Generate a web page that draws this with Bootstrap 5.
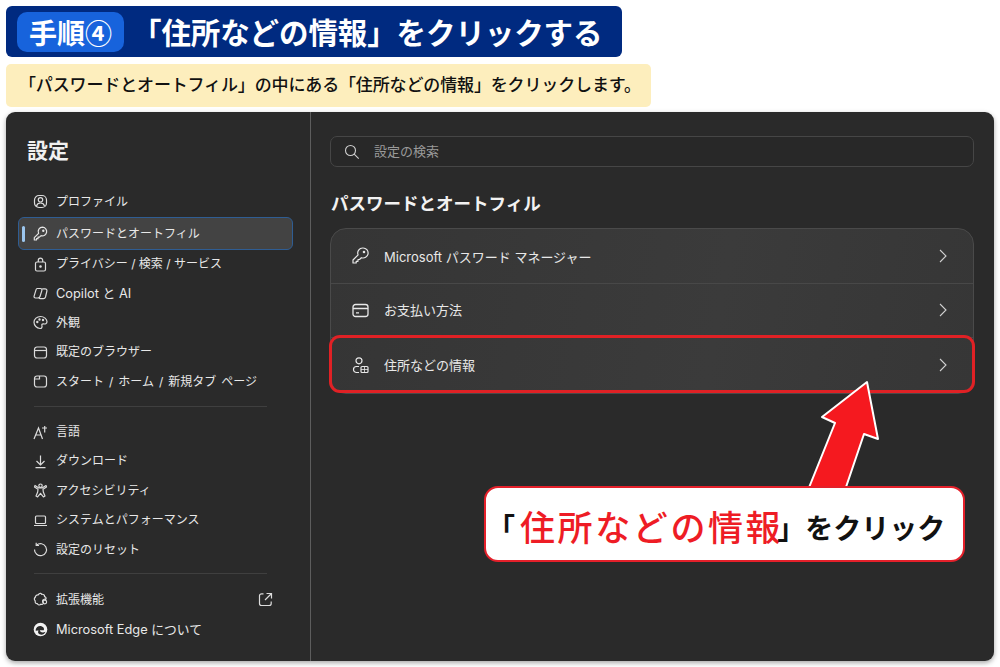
<!DOCTYPE html>
<html lang="ja">
<head>
    <meta charset="UTF-8">
    <meta name="viewport" content="width=device-width, initial-scale=1.0">
    <title>住所などの情報</title>

    <link href="https://cdn.jsdelivr.net/npm/bootstrap@5.3.3/dist/css/bootstrap.min.css" rel="stylesheet">

    <style>
        html, body { height: 667px; overflow: hidden; }
        body {
            background: #fff;
            font-family: Inter, "Noto Sans CJK JP", sans-serif;
            padding: 6px 6px 0;
            position: relative;
        }

        .step-bar {
            width: 616px; height: 51px;
            background: #002a80;
            border-radius: 6px;
            color: #fff;
            padding-left: 11px;
            font-family: "Noto Sans CJK JP", sans-serif;
        }
        .step-no {
            width: 107px; height: 40px;
            background: #1763dc;
            border-radius: 10px;
            font-size: 28px; font-weight: 700;
            line-height: 40px;
            white-space: nowrap;
        }
        .step-no span { font-size: 27px; }
        .step-title {
            font-size: 29.5px; font-weight: 700;
            margin-left: 8px;
            letter-spacing: -.1px;
            white-space: nowrap;
        }
        .note-bar {
            width: 645px; height: 43px;
            margin-top: 7px;
            background: #fdeebd;
            border-radius: 5px;
            color: #111;
            font-size: 17px; font-weight: 500;
            letter-spacing: -.14px;
            padding-left: 13px;
            white-space: nowrap;
        }
        .win {
            width: 988px; height: 549px;
            margin-top: 5px;
            background: #2a2a2a;
            border-radius: 9px;
            color: #e8e8e8;
            box-shadow: 0 2px 5px rgba(0, 0, 0, .35);
            overflow: hidden;
        }
        .side {
            width: 305px; height: 100%;
            border-right: 1px solid #5d5d5d;
            padding: 26px 17px 0 12px;
        }
        .side-title {
            font-size: 21px; font-weight: 700;
            color: #f0f0f0;
            margin: 0 0 23px 9px;
            line-height: 26px;
        }
        .side-item {
            height: 29.4px;
            padding-left: 15px;
            font-size: 12px;
            gap: 8px;
            position: relative;
            white-space: nowrap;
        }
        .side-item svg { flex: none; }
        .side-item.is-on {
            height: 33px;
            margin: 1px 0 -1px;
            background: #434343;
            border: 1px solid #2f5d93;
            border-radius: 6px;
            padding-left: 14px;
        }
        .side-item.is-on::before {
            content: "";
            position: absolute;
            left: 3px; top: 8px;
            width: 3px; height: 16px;
            border-radius: 2px;
            background: #9cc6ee;
        }
        .side-sep {
            height: 1px;
            background: #3f3f3f;
            margin: 10px 26px 10px 16px;
        }
        .side-sep.is-last { margin: 9px 26px 11px 16px; }
        .wide-words { word-spacing: 1.6px; }
        .latin-row { font-size: 12.8px; }
        .side-ext { margin-right: 20px; }
        .main-pane { padding: 24px 20px 0 19px; }
        .search-box {
            height: 31px;
            border: 1px solid #464646;
            background: #282828;
            border-radius: 7px;
            padding-left: 13px;
            gap: 14px;
            color: #9a9a9a;
            font-size: 13px;
        }
        .main-title {
            font-size: 17.5px; font-weight: 700;
            color: #f2f2f2;
            margin: 25px 0 12px 1px;
            line-height: 24px;
        }
        .set-card {
            background: linear-gradient(100deg, #353535, #3b3b3b 60%, #363636);
            border: 1px solid #4a4a4a;
            border-radius: 16px;
            overflow: hidden;
        }
        .set-row {
            height: 54.5px;
            padding: 0 25px 0 21px;
            gap: 15px;
            font-size: 13px;
            border-bottom: 1px solid #484848;
        }
        .set-row:last-child { border-bottom: 0; }
        .set-row .low-text { margin-top: 3px; }
        .red-frame {
            position: absolute;
            left: 329px; top: 335px;
            width: 646px; height: 58px;
            border: 3px solid #e02125;
            border-radius: 11px;
        }
        .up-arrow {
            position: absolute;
            left: 800px; top: 370px;
        }
        .call-box {
            position: absolute;
            left: 484px; top: 486px;
            width: 481px; height: 76px;
            background: #fff;
            border: 2px solid #e4202a;
            border-radius: 14px;
            color: #111;
            font-family: "Noto Sans CJK JP", sans-serif;
            font-weight: 700;
            font-size: 28px;
            padding: 5px 0 0 1px;
            white-space: nowrap;
        }
        .call-red {
            color: #ee1c25;
            font-size: 35px;
            font-weight: 500;
            letter-spacing: 2.6px;
            margin-left: 5px;
        }
        .call-end { margin-left: -6px; }
    </style>
</head>
<body>
    <div class="step-bar d-flex align-items-center">
        <div class="step-no text-center">手順<span>④</span></div>
        <div class="step-title">「住所などの情報」をクリックする</div>
    </div>
    <div class="note-bar d-flex align-items-center">「パスワードとオートフィル」の中にある「住所などの情報」をクリックします。</div>

    <div class="win d-flex">
        <div class="side flex-shrink-0">
            <div class="side-title">設定</div>

            <div class="side-item d-flex align-items-center">
                <svg width="15" height="15" viewBox="0 0 15 15" fill="none" stroke="#dcdcdc" stroke-width="1.2"><rect x="1.500" y="1.500" width="12" height="12" rx="4.500"/><circle cx="7.500" cy="5.800" r="2.200"/><path d="M3.500 12c.5-2.200 2.200-3 4-3s3.500.8 4 3"/></svg>
                <span>プロファイル</span>
            </div>
            <div class="side-item is-on d-flex align-items-center">
                <svg width="15" height="15" viewBox="0 0 15 15" fill="none" stroke="#e4e4e4" stroke-width="1.2" stroke-linejoin="round"><path d="M9.500 1.200a4.300 4.300 0 1 1-1.400 8.400L6.500 11.200H5v1.500H3.500v1.300H1.300v-2.400l4.300-4.300A4.300 4.300 0 0 1 9.500 1.200z"/><circle cx="10.300" cy="4.700" r=".6"/></svg>
                <span>パスワードとオートフィル</span>
            </div>
            <div class="side-item d-flex align-items-center">
                <svg width="15" height="15" viewBox="0 0 15 15" fill="none" stroke="#dcdcdc" stroke-width="1.2"><rect x="2.500" y="5" width="10" height="9" rx="1.500"/><path d="M5.300 5V3.300a2.200 2.200 0 0 1 4.400 0V5"/><circle cx="7.500" cy="9.500" r=".7" fill="#dcdcdc"/></svg>
                <span>プライバシー / 検索 / サービス</span>
            </div>
            <div class="side-item d-flex align-items-center">
                <svg width="15" height="15" viewBox="0 0 15 15" fill="none" stroke="#dcdcdc" stroke-width="1.200" stroke-linejoin="round"><path d="M4.200 2.500h3.300c1 0 1.700.8 1.400 1.800L7 10.500c-.3 1-1.200 1.500-2.200 1.500H2.500c-1 0-1.700-.9-1.400-1.900L3 3.800c.2-.8.500-1.300 1.200-1.300z"/><path d="M9.200 2.800h2.800c1.200 0 2.200 1 1.900 2.200l-1.400 6c-.3 1-1.100 1.700-2.100 1.700H7.500c-.8 0-1.300-.4-1.500-1"/></svg>
                <span class="latin-row">Copilot と AI</span>
            </div>
            <div class="side-item d-flex align-items-center">
                <svg width="15" height="15" viewBox="0 0 15 15" fill="none" stroke="#dcdcdc" stroke-width="1.2"><path d="M7.500 1.500c3.500 0 6.500 2.500 6.500 5.300 0 2-2 2.400-3.500 2.100-1.300-.2-2 .6-1.600 1.700.5 1.400-.2 3-1.900 2.900C3.800 13.300 1 10.500 1 7.300 1 4 4 1.500 7.500 1.500z"/><circle cx="4.300" cy="7" r=".6"/><circle cx="6.500" cy="4.500" r=".6"/><circle cx="10" cy="5" r=".6"/></svg>
                <span>外観</span>
            </div>
            <div class="side-item d-flex align-items-center">
                <svg width="15" height="15" viewBox="0 0 15 15" fill="none" stroke="#dcdcdc" stroke-width="1.2"><rect x="1.500" y="2" width="12" height="11" rx="2.500"/><path d="M1.500 5.500h12"/></svg>
                <span>既定のブラウザー</span>
            </div>
            <div class="side-item d-flex align-items-center">
                <svg width="15" height="15" viewBox="0 0 15 15" fill="none" stroke="#dcdcdc" stroke-width="1.2"><rect x="1.500" y="2" width="12" height="11" rx="2.500"/><path d="M1.500 5h5V2"/></svg>
                <span class="wide-words">スタート / ホーム / 新規タブ ページ</span>
            </div>

            <div class="side-sep"></div>

            <div class="side-item d-flex align-items-center">
                <svg width="15" height="15" viewBox="0 0 15 15" fill="none" stroke="#dcdcdc" stroke-width="1.2"><path d="M1 14 5.500 3l4 11M2.700 10h5.600M9 3h5M11.700 1v6.500"/></svg>
                <span>言語</span>
            </div>
            <div class="side-item d-flex align-items-center">
                <svg width="15" height="15" viewBox="0 0 15 15" fill="none" stroke="#dcdcdc" stroke-width="1.2"><path d="M7.500 1.500v9.500M3.500 7l4 4 4-4M2.500 13.700h10"/></svg>
                <span>ダウンロード</span>
            </div>
            <div class="side-item d-flex align-items-center">
                <svg width="15" height="15" viewBox="0 0 15 15" fill="none" stroke="#dcdcdc" stroke-width="1.2" stroke-linejoin="round"><circle cx="7.500" cy="2.700" r="1.700"/><path d="M2 2.500 1.500 4 5 6.200 4.700 9l-1.700 4 1.600.9 2.900-3.600 2.900 3.600 1.600-.9L10.300 9 10 6.200 13.500 4 13 2.500 9.500 4.800h-4z"/></svg>
                <span>アクセシビリティ</span>
            </div>
            <div class="side-item d-flex align-items-center">
                <svg width="15" height="15" viewBox="0 0 15 15" fill="none" stroke="#dcdcdc" stroke-width="1.2"><rect x="2.500" y="3" width="10" height="7.500" rx="1"/><path d="M1 12.500h13"/></svg>
                <span>システムとパフォーマンス</span>
            </div>
            <div class="side-item d-flex align-items-center">
                <svg width="15" height="15" viewBox="0 0 15 15" fill="none" stroke="#dcdcdc" stroke-width="1.2"><path d="M3.500 3.200A6 6 0 1 1 1.500 7.500"/><path d="M3.200 .8v2.700h2.800"/></svg>
                <span>設定のリセット</span>
            </div>

            <div class="side-sep is-last"></div>

            <div class="side-item d-flex align-items-center">
                <svg width="15" height="15" viewBox="0 0 15 15" fill="none" stroke="#dcdcdc" stroke-width="1.200" stroke-linejoin="round"><path d="M6.200 1.700c.9-.8 2.100-.4 2.600.7 1.400-.5 3 .6 2.700 2.200 1.500.3 2 1.900 1.200 2.900a2 2 0 1 0-2.200 3.500c-.2 1.200-1.500 1.800-2.600 1.200-1 1.200-3 1-3.500-.6-1.600.2-2.700-1.300-2.100-2.700C1 8 1 6 2.300 5.400 2 3.700 4 2.600 5.200 3z"/><circle cx="11.800" cy="10" r="1.800"/></svg>
                <span class="flex-grow-1">拡張機能</span>
                <svg class="side-ext" width="15" height="15" viewBox="0 0 15 15" fill="none" stroke="#dcdcdc" stroke-width="1.200"><path d="M5.500 1.800H3.500a2 2 0 0 0-2 2v7.700a2 2 0 0 0 2 2h7.700a2 2 0 0 0 2-2V9.500M8.500 1.500h5v5M13.500 1.500 7 8"/></svg>
            </div>
            <div class="side-item d-flex align-items-center">
                <svg width="15" height="15" viewBox="0 0 15 15"><circle cx="7.500" cy="7.500" r="6.800" fill="#f2f2f2"/><path d="M2.500 8.500C3 5 6 3.500 8.500 4.300c2 .6 3 2.300 2.300 4H6.800c0 1.800 2.700 2.800 5.700 1.500-1 2.800-4 3.500-6 2.500-1.500-.7-1.800-2.300-1-3.800-1 0-2 .3-3 0z" fill="#2a2a2a"/></svg>
                <span class="latin-row">Microsoft Edge について</span>
            </div>
        </div>

        <div class="main-pane flex-grow-1">
            <div class="search-box d-flex align-items-center">
                <svg width="16" height="16" viewBox="0 0 16 16" fill="none" stroke="#cfcfcf" stroke-width="1.1"><circle cx="6.500" cy="6.500" r="5"/><path d="m10.200 10.200 4.500 4.500"/></svg>
                <span>設定の検索</span>
            </div>
            <div class="main-title">パスワードとオートフィル</div>
            <div class="set-card">
                <div class="set-row d-flex align-items-center">
                    <svg width="17" height="17" viewBox="0 0 17 17" fill="none" stroke="#e8e8e8" stroke-width="1.200" stroke-linejoin="round"><path d="M11 1a5 5 0 1 1-1.600 9.700l-1.900 1.800H6v1.800H4.200V16H1v-3l5.100-5.100A5 5 0 0 1 11 1z"/><circle cx="12" cy="5" r=".7"/></svg>
                    <span class="flex-grow-1 low-text">Microsoft パスワード マネージャー</span>
                    <svg width="10" height="14" viewBox="0 0 10 14" fill="none" stroke="#cfcfcf" stroke-width="1.100"><path d="m2 1 6 6-6 6"/></svg>
                </div>
                <div class="set-row d-flex align-items-center">
                    <svg width="17" height="17" viewBox="0 0 17 17" fill="none" stroke="#e8e8e8" stroke-width="1.300"><rect x="1" y="2.500" width="15" height="12" rx="2.500"/><path d="M1 6.500h15M4 10.800h3"/></svg>
                    <span class="flex-grow-1">お支払い方法</span>
                    <svg width="10" height="14" viewBox="0 0 10 14" fill="none" stroke="#cfcfcf" stroke-width="1.100"><path d="m2 1 6 6-6 6"/></svg>
                </div>
                <div class="set-row d-flex align-items-center">
                    <svg width="17" height="17" viewBox="0 0 17 17" fill="none" stroke="#e8e8e8" stroke-width="1.200"><circle cx="7" cy="3.800" r="3"/><path d="M7 9.500H4.500a3 3 0 0 0 0 6H7"/><rect x="9" y="9.500" width="7" height="6" rx="1"/><path d="M9 12.500h7M12.500 9.500v6" stroke-width=".8"/></svg>
                    <span class="flex-grow-1">住所などの情報</span>
                    <svg width="10" height="14" viewBox="0 0 10 14" fill="none" stroke="#cfcfcf" stroke-width="1.100"><path d="m2 1 6 6-6 6"/></svg>
                </div>
            </div>
        </div>
    </div>

    <div class="red-frame"></div>

    <svg class="up-arrow" width="90" height="120" viewBox="800 370 90 120">
        <path d="M867 382 878 439 864 434 845 490H808L835 423 822 417Z" fill="#f5191f" stroke="#fff" stroke-width="2" stroke-linejoin="round"/>
    </svg>

    <div class="call-box d-flex align-items-center">
        <span>「</span><span class="call-red">住所などの情報</span><span class="call-end">」をクリック</span>
    </div>

    <script src="https://cdn.jsdelivr.net/npm/bootstrap@5.3.3/dist/js/bootstrap.bundle.min.js"></script>
</body>
</html>
